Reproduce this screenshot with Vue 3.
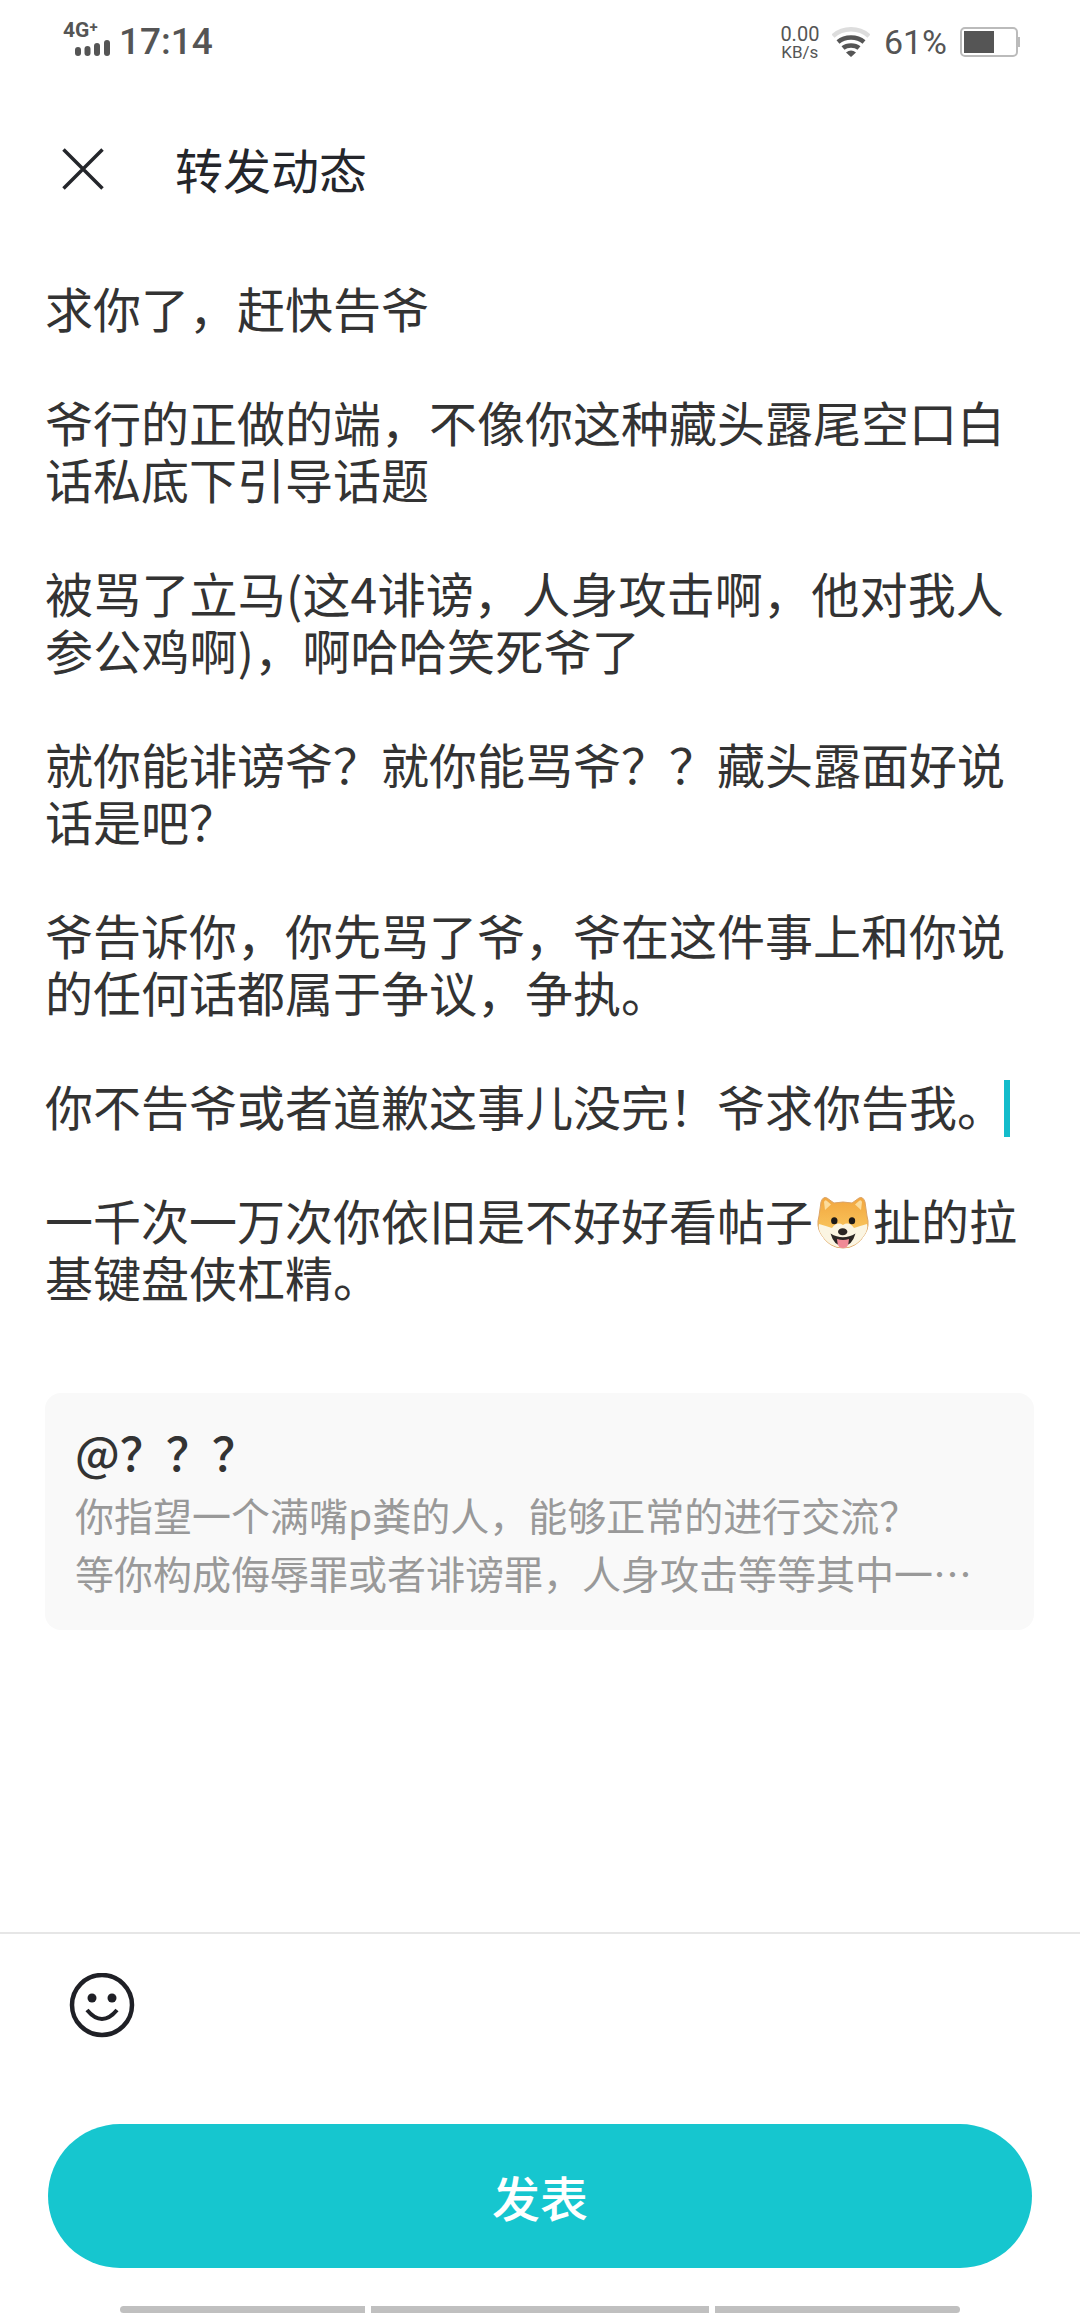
<script setup>
const paragraphsBefore = [
  '求你了，赶快告爷',
  '爷行的正做的端，不像你这种藏头露尾空口白话私底下引导话题',
]
const paragraphsAfter = [
  '就你能诽谤爷？就你能骂爷？？藏头露面好说话是吧？',
  '爷告诉你，你先骂了爷，爷在这件事上和你说的任何话都属于争议，争执。',
]
</script>

<template>
  <div class="page">
    <div class="status-bar">
      <div class="status-left">
        <div class="network">
          <span class="net-label">4G<sup>+</sup></span>
          <svg class="signal" width="36" height="16" viewBox="0 0 36 16">
            <rect x="0" y="7" width="6" height="9" rx="3" fill="#555" />
            <rect x="9.500" y="6" width="6" height="10" rx="3" fill="#555" />
            <rect x="19" y="3" width="6" height="13" rx="3" fill="#555" />
            <rect x="29" y="0" width="6" height="16" rx="3" fill="#555" />
          </svg>
        </div>
        <span class="time">17:14</span>
      </div>
      <div class="status-right">
        <div class="speed">
          <span class="speed-num">0.00</span>
          <span class="speed-unit">KB/s</span>
        </div>
        <svg class="wifi" width="38" height="30" viewBox="0 0 38 30">
          <path d="M1 9 C11 0 27 0 37 9" fill="none" stroke="#ddd" stroke-width="4.500" />
          <path d="M6 15 C13 9 25 9 32 15" fill="none" stroke="#555" stroke-width="4.500" />
          <path d="M11 21 C15 17.500 23 17.500 27 21" fill="none" stroke="#555" stroke-width="4.500" />
          <path d="M14 25.500 Q19 21.500 24 25.500 L19 30 Z" fill="#555" />
        </svg>
        <span class="percent">61%</span>
        <div class="battery">
          <div class="battery-body"><div class="battery-fill"></div></div>
          <div class="battery-nub"></div>
        </div>
      </div>
    </div>

    <header class="header">
      <svg class="close" width="42" height="42" viewBox="0 0 42 42">
        <path d="M1.500 1.500 L40.500 40.500 M40.500 1.500 L1.500 40.500" stroke="#24262b" stroke-width="3.500" fill="none" />
      </svg>
      <h1 class="title">转发动态</h1>
    </header>

    <div class="content">
      <p v-for="text in paragraphsBefore" :key="text" class="para">{{ text }}</p>
      <p class="para para-wide">被骂了立马(这4诽谤，人身攻击啊，他对我人参公鸡啊)，啊哈哈笑死爷了</p>
      <p v-for="text in paragraphsAfter" :key="text" class="para">{{ text }}</p>
      <p class="para">你不告爷或者道歉这事儿没完！爷求你告我。<span class="cursor"></span></p>
      <p class="para">一千次一万次你依旧是不好好看帖子<span class="emoji"><svg width="50" height="53" viewBox="0 0 50 53">
        <defs>
          <linearGradient id="fur" x1="0" y1="0" x2="0" y2="1">
            <stop offset="0" stop-color="#f2a63e" />
            <stop offset="0.6" stop-color="#f8c25a" />
          </linearGradient>
        </defs>
        <path d="M3 6 Q5 0 9 2 L16 7 Q25 5 34 7 L41 2 Q45 0 47 6 L49 20 Q52 30 47 38 Q39 52 25 52 Q11 52 3 38 Q-2 30 1 20 Z" fill="url(#fur)" stroke="#dba468" stroke-width="1" />
        <path d="M6 6 Q7 3 9 5 L13 8.500 L7 14 Z M44 6 Q43 3 41 5 L37 8.500 L43 14 Z" fill="#fbdc9c" />
        <path d="M1 28 Q8 30 14 32 Q19 25 25 29 Q31 25 36 32 Q42 30 49 28 Q50 33 47 38 Q39 51.500 25 51.500 Q11 51.500 3 38 Q0 33 1 28 Z" fill="#fbf5e2" />
        <ellipse cx="16.300" cy="24.700" rx="3.200" ry="3.500" fill="#1d1a18" />
        <ellipse cx="34" cy="24.700" rx="3.200" ry="3.500" fill="#1d1a18" />
        <ellipse cx="24.700" cy="35.700" rx="4.700" ry="3.500" fill="#2b2624" />
        <path d="M12.500 37.500 Q25 45 37.500 37.500 Q34 50 25 50 Q16 50 12.500 37.500 Z" fill="#2b2624" />
        <path d="M19 43 Q25 45 31 43 L30.500 47 Q30 52 25 52 Q20 52 19.500 47 Z" fill="#f08a96" />
      </svg></span>扯的拉基键盘侠杠精。</p>
    </div>

    <div class="quote">
      <div class="quote-name">@？？？</div>
      <div class="quote-line">你指望一个满嘴p粪的人，能够正常的进行交流？</div>
      <div class="quote-line">等你构成侮辱罪或者诽谤罪，人身攻击等等其中一…</div>
    </div>

    <div class="toolbar">
      <svg class="smile" width="66" height="66" viewBox="0 0 66 66">
        <circle cx="33" cy="32" r="30" fill="none" stroke="#1f2026" stroke-width="4.500" />
        <circle cx="23" cy="25" r="4.500" fill="#1f2026" />
        <circle cx="43" cy="25" r="4.500" fill="#1f2026" />
        <path d="M18 37 Q33 55 48 37" fill="none" stroke="#1f2026" stroke-width="4" />
      </svg>
    </div>

    <button class="submit" type="button">发表</button>

    <div class="nav-hint">
      <span class="bar bar-left"></span>
      <span class="bar bar-mid"></span>
      <span class="bar bar-right"></span>
    </div>
  </div>
</template>

<style scoped>
.page {
  width: 1080px;
  height: 2316px;
  display: flex;
  flex-direction: column;
  background: #fff;
  overflow: hidden;
  font-family: "Noto Sans CJK SC", "Noto Sans", sans-serif;
  color: #333;
}

.status-bar {
  height: 80px;
  box-sizing: border-box;
  padding: 20px 60px 0 63px;
  display: flex;
  justify-content: space-between;
  align-items: flex-start;
  color: #555;
  font-family: Roboto, sans-serif;
}

.status-left {
  display: flex;
  align-items: flex-start;
}

.status-right {
  display: flex;
  align-items: center;
  margin-top: 3px;
}

.network {
  width: 47px;
  display: flex;
  flex-direction: column;
  align-items: flex-start;
  margin-right: 9px;
}

.net-label {
  font-size: 21px;
  font-weight: 700;
  line-height: 20px;
  height: 20px;
}

.net-label sup {
  font-size: 15px;
  line-height: 0;
  vertical-align: 5px;
}

.signal {
  margin-left: 12px;
}

.time {
  font-size: 37px;
  font-weight: 500;
  line-height: 36px;
  margin-top: 4px;
}

.speed {
  display: flex;
  flex-direction: column;
  align-items: center;
  width: 40px;
  margin-right: 12px;
}

.speed-num {
  font-size: 20px;
  line-height: 20px;
}

.speed-unit {
  font-size: 17px;
  line-height: 17px;
}

.wifi {
  margin-right: 14px;
}

.percent {
  font-size: 34px;
  line-height: 38px;
  margin-right: 13px;
}

.battery {
  display: flex;
  align-items: center;
}

.battery-body {
  width: 58px;
  height: 30px;
  box-sizing: border-box;
  border: 2px solid #bbb;
  border-radius: 5px;
  padding: 2px;
}

.battery-fill {
  width: 30px;
  height: 100%;
  background: #555;
}

.battery-nub {
  width: 2px;
  height: 10px;
  background: #bbb;
}

.header {
  height: 178px;
  box-sizing: border-box;
  padding-left: 62px;
  display: flex;
  align-items: center;
}

.close {
  margin-right: 71px;
}

.title {
  margin: 0 0 2px;
  font-size: 48px;
  font-weight: 400;
  line-height: 60px;
  color: #24262b;
}

.content {
  margin-top: 21px;
  padding: 0 45px;
  font-size: 48px;
  line-height: 57px;
}

.para {
  margin: 0 0 57px;
}

.para:last-child {
  margin-bottom: 0;
}

.para-wide {
  letter-spacing: 0.200px;
}

.cursor {
  display: inline-block;
  width: 6px;
  height: 57px;
  margin-left: -1px;
  background: #14bccb;
  vertical-align: top;
  transform: translateY(3px);
}

.emoji {
  display: inline-block;
  width: 60px;
  height: 57px;
  text-align: center;
  vertical-align: top;
}

.emoji svg {
  display: inline-block;
  margin-top: 5px;
  overflow: visible;
}

.quote {
  margin: 88px 46px 0 45px;
  height: 237px;
  box-sizing: border-box;
  padding: 28px 30px 0;
  background: #f9f9f9;
  border-radius: 16px;
}

.quote-name {
  font-size: 46px;
  font-weight: 500;
  line-height: 60px;
  margin-bottom: 4px;
  color: #333;
}

.quote-line {
  font-size: 39px;
  line-height: 58px;
  color: #999;
  white-space: nowrap;
}

.toolbar {
  margin-top: auto;
  box-sizing: border-box;
  border-top: 2px solid #e6e6e6;
  padding: 39px 0 0 69px;
  height: 105px;
}

.smile {
  display: block;
}

.submit {
  display: block;
  margin: 87px 48px 0;
  width: 984px;
  height: 144px;
  border: 0;
  border-radius: 72px;
  background: #16c6cf;
  color: #fff;
  font-family: inherit;
  font-size: 48px;
  font-weight: 500;
}

.nav-hint {
  margin-top: 38px;
  padding: 0 120px 3px;
  display: flex;
  gap: 6px;
}

.bar {
  height: 7px;
  background: #c0c0c0;
}

.bar-left {
  width: 245px;
  border-radius: 4px 0 0 4px;
}

.bar-mid {
  width: 338px;
}

.bar-right {
  width: 245px;
  border-radius: 0 4px 4px 0;
}
</style>

<style>
body {
  background: #fff;
}
</style>
